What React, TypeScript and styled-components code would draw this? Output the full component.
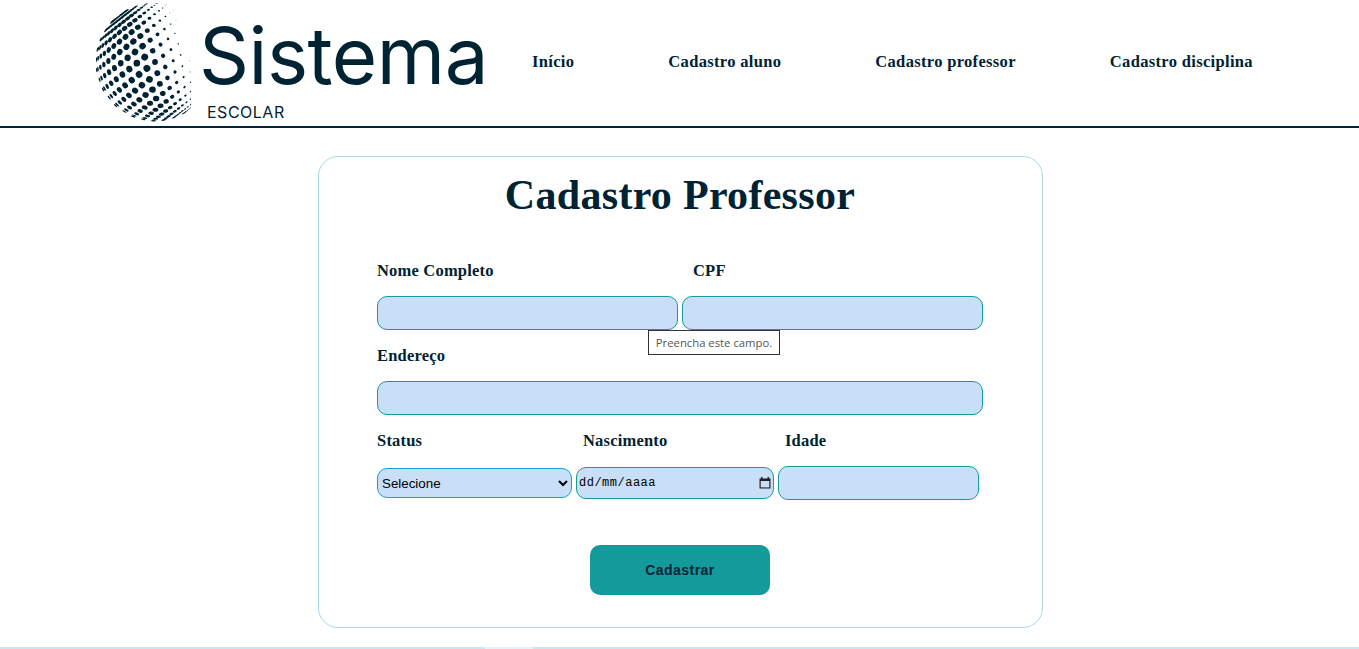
import React from 'react';
import styled, { createGlobalStyle } from 'styled-components';

const navy = '#002333';
const teal = '#159a9c';
const fieldBg = '#c9dff7';

const GlobalStyle = createGlobalStyle`
  html, body {
    margin: 0;
    padding: 0;
    background: #fff;
    height: 100%;
    overflow: hidden;
  }
  #root {
    height: 100%;
  }
`;

const Page = styled.div`
  display: flex;
  flex-direction: column;
  height: 649px;
  color: ${navy};
`;

const Header = styled.header`
  display: flex;
  align-items: center;
  height: 126px;
  padding-left: 96px;
  border-bottom: 2px solid ${navy};
  flex-shrink: 0;
`;

const Logo = styled.div`
  display: flex;
  width: 436px;
  flex-shrink: 0;
`;

const LogoText = styled.div`
  display: flex;
  flex-direction: column;
  margin-left: 8px;
`;

const LogoTitle = styled.span`
  font-family: Inter, sans-serif;
  font-weight: 400;
  font-size: 78px;
  line-height: 96px;
  letter-spacing: -0.5px;
  margin-top: 5px;
`;

const LogoSub = styled.span`
  font-family: Inter, sans-serif;
  font-size: 16px;
  line-height: 18px;
  letter-spacing: 0.5px;
  margin-left: 8px;
  margin-top: -1px;
`;

const Nav = styled.nav`
  display: flex;
  gap: 94px;
  margin-bottom: 2px;
`;

const NavLink = styled.a`
  font-family: 'Liberation Serif', serif;
  font-weight: 700;
  font-size: 16.5px;
  letter-spacing: 0.33px;
  color: ${navy};
  text-decoration: none;
`;

const Main = styled.main`
  flex: 1;
  display: flex;
  justify-content: center;
  padding: 28px 0 0 2px;
`;

const Card = styled.form`
  box-sizing: border-box;
  width: 725px;
  height: 472px;
  padding: 0 59px 0 58px;
  border: 1px solid #a8d8e6;
  border-radius: 20px;
`;

const Title = styled.h1`
  margin: 14px 0 42px;
  font-family: 'Liberation Serif', serif;
  font-weight: 700;
  font-size: 42px;
  line-height: 48px;
  letter-spacing: 0.3px;
  text-align: center;
  color: ${navy};
`;

const LabelRow = styled.div`
  display: flex;
  height: 20px;
  margin-bottom: 15px;
`;

const Label = styled.label<{ $width?: number }>`
  width: ${({ $width }) => ($width ? `${$width}px` : 'auto')};
  font-family: 'Liberation Serif', serif;
  font-weight: 700;
  font-size: 16.5px;
  line-height: 20px;
  letter-spacing: 0.2px;
  color: ${navy};
`;

const FieldRow = styled.div`
  position: relative;
  display: flex;
  align-items: center;
  gap: 4px;
  height: 34px;
  margin-bottom: 16px;
`;

const TextField = styled.input<{ $width?: number }>`
  box-sizing: border-box;
  width: ${({ $width }) => ($width ? `${$width}px` : '100%')};
  height: 34px;
  padding: 0 6px;
  background: ${fieldBg};
  border: 1px solid ${teal};
  border-radius: 10px;
  outline: none;
`;

const SelectField = styled.select`
  box-sizing: border-box;
  width: 195px;
  height: 30px;
  padding-left: 0;
  font-family: 'Liberation Sans', sans-serif;
  font-size: 13.33px;
  color: #000;
  background: ${fieldBg};
  border: 1px solid #0ea5d8;
  border-radius: 10px;
  outline: none;
`;

const DateField = styled.div`
  box-sizing: border-box;
  display: flex;
  align-items: center;
  justify-content: space-between;
  width: 198px;
  height: 32px;
  padding: 0 1px 0 2px;
  color: #000;
  background: ${fieldBg};
  border: 1px solid ${teal};
  border-radius: 10px;
`;

const DateText = styled.span`
  font-family: 'Liberation Mono', monospace;
  font-size: 12px;
  letter-spacing: 0.5px;
`;

const Tooltip = styled.div`
  position: absolute;
  left: 271px;
  top: 34px;
  box-sizing: border-box;
  width: 132px;
  height: 25px;
  display: flex;
  align-items: center;
  justify-content: center;
  font-family: 'Open Sans', sans-serif;
  font-size: 11.3px;
  color: #555;
  background: #fff;
  border: 1px solid #333;
  white-space: nowrap;
`;

const Actions = styled.div`
  display: flex;
  justify-content: center;
  margin-top: 45px;
`;

const SubmitButton = styled.button`
  width: 180px;
  height: 50px;
  font-family: 'Liberation Sans', sans-serif;
  font-weight: 700;
  font-size: 14px;
  letter-spacing: 0.45px;
  color: ${navy};
  background: ${teal};
  border: none;
  border-radius: 10px;
`;

const BottomStrip = styled.div`
  position: absolute;
  left: 0;
  right: 0;
  bottom: 0;
  height: 2px;
  background: linear-gradient(
    to right,
    #cfe5ee 0,
    #cfe5ee 485px,
    #e8f3f7 485px,
    #e8f3f7 533px,
    #cfe5ee 533px
  );
`;

// halftone sphere, only its left part shows, dots fade out towards the upper right
const buildDots = () => {
  const dots: { x: number; y: number; rx: number; ry: number; angle: number }[] = [];
  const R = 59;
  const tilt = (-38 * Math.PI) / 180;
  const step = 10;
  for (let row = -9; row <= 9; row++) {
    const lat = (row * step * Math.PI) / 180;
    for (let col = -12; col <= 12; col++) {
      const lon = ((col * step + (row % 2 ? step / 2 : 0)) * Math.PI) / 180;
      const px = Math.cos(lat) * Math.sin(lon);
      const py = Math.sin(lat);
      const nz = Math.cos(lat) * Math.cos(lon);
      if (nz <= 0.05) continue;
      const nx = px * Math.cos(tilt) - py * Math.sin(tilt);
      const ny = px * Math.sin(tilt) + py * Math.cos(tilt);
      const fade = Math.min(1, (0.62 - (nx * 0.9 - ny * 0.3)) / 0.75);
      const size = 3.5 * fade;
      if (size < 0.3) continue;
      dots.push({
        x: 59 + nx * R,
        y: 59 + ny * R,
        rx: size * Math.max(nz, 0.2),
        ry: size * (0.6 + 0.4 * nz),
        angle: (Math.atan2(ny, nx) * 180) / Math.PI,
      });
    }
  }
  return dots;
};

const dots = buildDots();

const Sphere = () => (
  <svg width="95" height="120" viewBox="0 0 95 120" style={{ flexShrink: 0 }}>
    {dots.map((d, i) => (
      <ellipse
        key={i}
        cx={d.x}
        cy={d.y}
        rx={d.rx}
        ry={d.ry}
        fill={navy}
        transform={`rotate(${d.angle} ${d.x} ${d.y})`}
      />
    ))}
  </svg>
);

const CalendarIcon = () => (
  <svg width="14" height="14" viewBox="0 0 14 14">
    <path d="M3 1h1.5v1.5h5V1H11v1.5h1.5v10h-11v-10H3z" fill="#222" />
    <rect x="2.7" y="5" width="8.6" height="6.4" fill={fieldBg} />
  </svg>
);

export default function App() {
  return (
    <Page>
      <GlobalStyle />
      <Header>
        <Logo>
          <Sphere />
          <LogoText>
            <LogoTitle>Sistema</LogoTitle>
            <LogoSub>ESCOLAR</LogoSub>
          </LogoText>
        </Logo>
        <Nav>
          <NavLink>Início</NavLink>
          <NavLink>Cadastro aluno</NavLink>
          <NavLink>Cadastro professor</NavLink>
          <NavLink>Cadastro disciplina</NavLink>
        </Nav>
      </Header>
      <Main>
        <Card>
          <Title>Cadastro Professor</Title>
          <LabelRow>
            <Label $width={316}>Nome Completo</Label>
            <Label>CPF</Label>
          </LabelRow>
          <FieldRow>
            <TextField $width={301} />
            <TextField $width={301} />
            <Tooltip>Preencha este campo.</Tooltip>
          </FieldRow>
          <LabelRow>
            <Label>Endereço</Label>
          </LabelRow>
          <FieldRow>
            <TextField />
          </FieldRow>
          <LabelRow>
            <Label $width={206}>Status</Label>
            <Label $width={202}>Nascimento</Label>
            <Label>Idade</Label>
          </LabelRow>
          <FieldRow>
            <SelectField>
              <option>Selecione</option>
            </SelectField>
            <DateField>
              <DateText>dd/mm/aaaa</DateText>
              <CalendarIcon />
            </DateField>
            <TextField $width={201} />
          </FieldRow>
          <Actions>
            <SubmitButton type="button">Cadastrar</SubmitButton>
          </Actions>
        </Card>
      </Main>
      <BottomStrip />
    </Page>
  );
}
